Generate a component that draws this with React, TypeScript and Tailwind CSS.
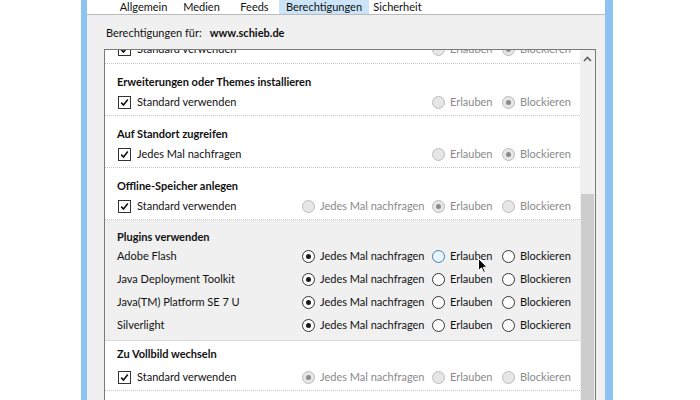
import React from "react";

const FONT = { fontFamily: "Lato, 'Noto Sans', 'Liberation Sans', sans-serif" };

function Radio({ checked, disabled, hover }: { checked?: boolean; disabled?: boolean; hover?: boolean }) {
  const border = hover ? "border-[#3c7fb1]" : disabled ? "border-[#bcbcbc]" : "border-[#333333]";
  const bg = disabled ? "bg-[#e6e6e6]" : hover ? "bg-[#eaf4fc]" : "bg-white";
  const dot = disabled ? "bg-[#8a8a8a]" : "bg-[#1a1a1a]";
  return (
    <span className={`w-[13px] h-[13px] rounded-full border ${border} ${bg} flex items-center justify-center shrink-0`}>
      {checked && <span className={`w-[5px] h-[5px] rounded-full ${dot}`} />}
    </span>
  );
}

function Check() {
  return (
    <span className="w-[13px] h-[13px] border border-[#333333] bg-white flex items-center justify-center shrink-0">
      <svg width="9" height="9" viewBox="0 0 9 9">
        <path d="M1.2 4.6 L3.5 7 L7.8 1.6" fill="none" stroke="#111" strokeWidth="1.6" />
      </svg>
    </span>
  );
}

type Opt = { label: string; checked?: boolean; hover?: boolean };

function RadioGroup({ opts, disabled }: { opts: (Opt | null)[]; disabled?: boolean }) {
  const widths = ["w-[130px]", "w-[70px]", "w-[64px]"];
  return (
    <div className="flex items-center">
      {opts.map((o, i) =>
        o ? (
          <div key={i} className={`${widths[i]} flex items-center gap-[5px] whitespace-nowrap`}>
            <Radio checked={o.checked} disabled={disabled} hover={o.hover} />
            <span className={disabled ? "text-[#8a8a8a]" : "text-[#111]"}>{o.label}</span>
          </div>
        ) : (
          <div key={i} className={widths[i]} />
        )
      )}
    </div>
  );
}

function CheckLabel({ text }: { text: string }) {
  return (
    <div className="flex items-center gap-[6px] pl-px whitespace-nowrap">
      <Check />
      <span className="text-[#111]">{text}</span>
    </div>
  );
}

function Row({
  title,
  check,
  opts,
}: {
  title: string;
  check: string;
  opts: (Opt | null)[];
}) {
  return (
    <div className="pl-[12px] pr-[14px] pt-[10px] pb-[3px] border-b border-dotted border-[#c4c4c4]">
      <div className="h-4 leading-4 font-bold text-[#111] whitespace-nowrap">{title}</div>
      <div className="mt-[2px] h-5 flex items-center justify-between">
        <CheckLabel text={check} />
        <RadioGroup opts={opts} disabled />
      </div>
    </div>
  );
}

export default function App() {
  const ask = (c?: boolean): Opt => ({ label: "Jedes Mal nachfragen", checked: c });
  const allow = (c?: boolean, h?: boolean): Opt => ({ label: "Erlauben", checked: c, hover: h });
  const block = (c?: boolean): Opt => ({ label: "Blockieren", checked: c });
  const plugins = ["Adobe Flash", "Java Deployment Toolkit", "Java(TM) Platform SE 7 U", "Silverlight"];

  return (
    <div className="relative w-[700px] h-[400px] bg-white overflow-hidden text-[11px]" style={FONT}>
      <div className="ml-[81px] w-[532px] h-[400px] border-l-[6px] border-r-[8px] border-[#8cc3f2] bg-[#f0f0f0] flex flex-col">
        {/* tabs */}
        <div className="h-[15px] bg-white border-b border-[#b9b9b9] text-[#111] shrink-0 overflow-hidden">
          <div className="flex h-[14px] pl-[27px] whitespace-nowrap">
            <span className="w-[59px] flex items-center justify-center">Allgemein</span>
            <span className="w-[57px] flex items-center justify-center">Medien</span>
            <span className="w-[49px] flex items-center justify-center">Feeds</span>
            <span className="w-[90px] bg-[#cce4f7] flex items-center justify-center">Berechtigungen</span>
            <span className="w-[57px] flex items-center justify-center">Sicherheit</span>
          </div>
        </div>
        {/* label */}
        <div className="h-[34px] pt-[2px] flex items-center pl-[19px] text-[#111] shrink-0 whitespace-nowrap">
          <span>Berechtigungen für:</span>
          <span className="ml-[8px] font-bold">www.schieb.de</span>
        </div>
        {/* listbox */}
        <div className="ml-[17px] w-[492px] flex-1 border-t border-l border-r border-[#7a7a7a] bg-white flex overflow-hidden">
          <div className="flex-1 overflow-hidden">
            <div className="-mt-[11px]">
              {/* partial first row */}
              <div className="pl-[12px] pr-[14px] pb-[4px] border-b border-dotted border-[#c4c4c4]">
                <div className="h-5 flex items-center justify-between">
                  <CheckLabel text="Standard verwenden" />
                  <RadioGroup opts={[null, allow(), block(true)]} disabled />
                </div>
              </div>
              <Row title="Erweiterungen oder Themes installieren" check="Standard verwenden" opts={[null, allow(), block(true)]} />
              <Row title="Auf Standort zugreifen" check="Jedes Mal nachfragen" opts={[null, allow(), block(true)]} />
              <Row title="Offline-Speicher anlegen" check="Standard verwenden" opts={[ask(), allow(true), block()]} />
              {/* plugins */}
              <div className="bg-[#f0f0f0] pl-[12px] pr-[14px] pt-[9px] pb-[3px] border-b border-[#d9d9d9]">
                <div className="h-4 leading-4 font-bold text-[#111]">Plugins verwenden</div>
                {plugins.map((p, i) => (
                  <div key={p} className="h-[23px] flex items-center justify-between">
                    <span className="text-[#111] whitespace-nowrap">{p}</span>
                    <RadioGroup opts={[ask(true), allow(false, i === 0), block()]} />
                  </div>
                ))}
              </div>
              <div className="pl-[12px] pr-[14px] pt-[5px] pb-[3px] border-b border-dotted border-[#c4c4c4]">
                <div className="h-4 leading-4 font-bold text-[#111]">Zu Vollbild wechseln</div>
                <div className="mt-[5px] h-5 flex items-center justify-between">
                  <CheckLabel text="Standard verwenden" />
                  <RadioGroup opts={[ask(true), allow(), block()]} disabled />
                </div>
              </div>
            </div>
          </div>
          {/* scrollbar */}
          <div className="w-[15px] bg-[#f0f0f0] flex flex-col shrink-0">
            <div className="h-[17px] flex items-center justify-center">
              <svg width="9" height="6" viewBox="0 0 9 6">
                <path d="M1 5 L4.5 1.5 L8 5" fill="none" stroke="#606060" strokeWidth="1.6" />
              </svg>
            </div>
            <div className="h-[127px]" />
            <div className="flex-1 bg-[#cdcdcd] mx-px" />
          </div>
        </div>
      </div>
      {/* cursor */}
      <svg className="absolute left-[478px] top-[258px]" width="10" height="16" viewBox="0 0 10 16">
        <path d="M0.5 0.5 L0.5 12.5 L3.5 9.8 L5.6 14.5 L7.3 13.8 L5.3 9.2 L9 9.2 Z" fill="#000" stroke="#fff" strokeWidth="1" />
      </svg>
    </div>
  );
}
